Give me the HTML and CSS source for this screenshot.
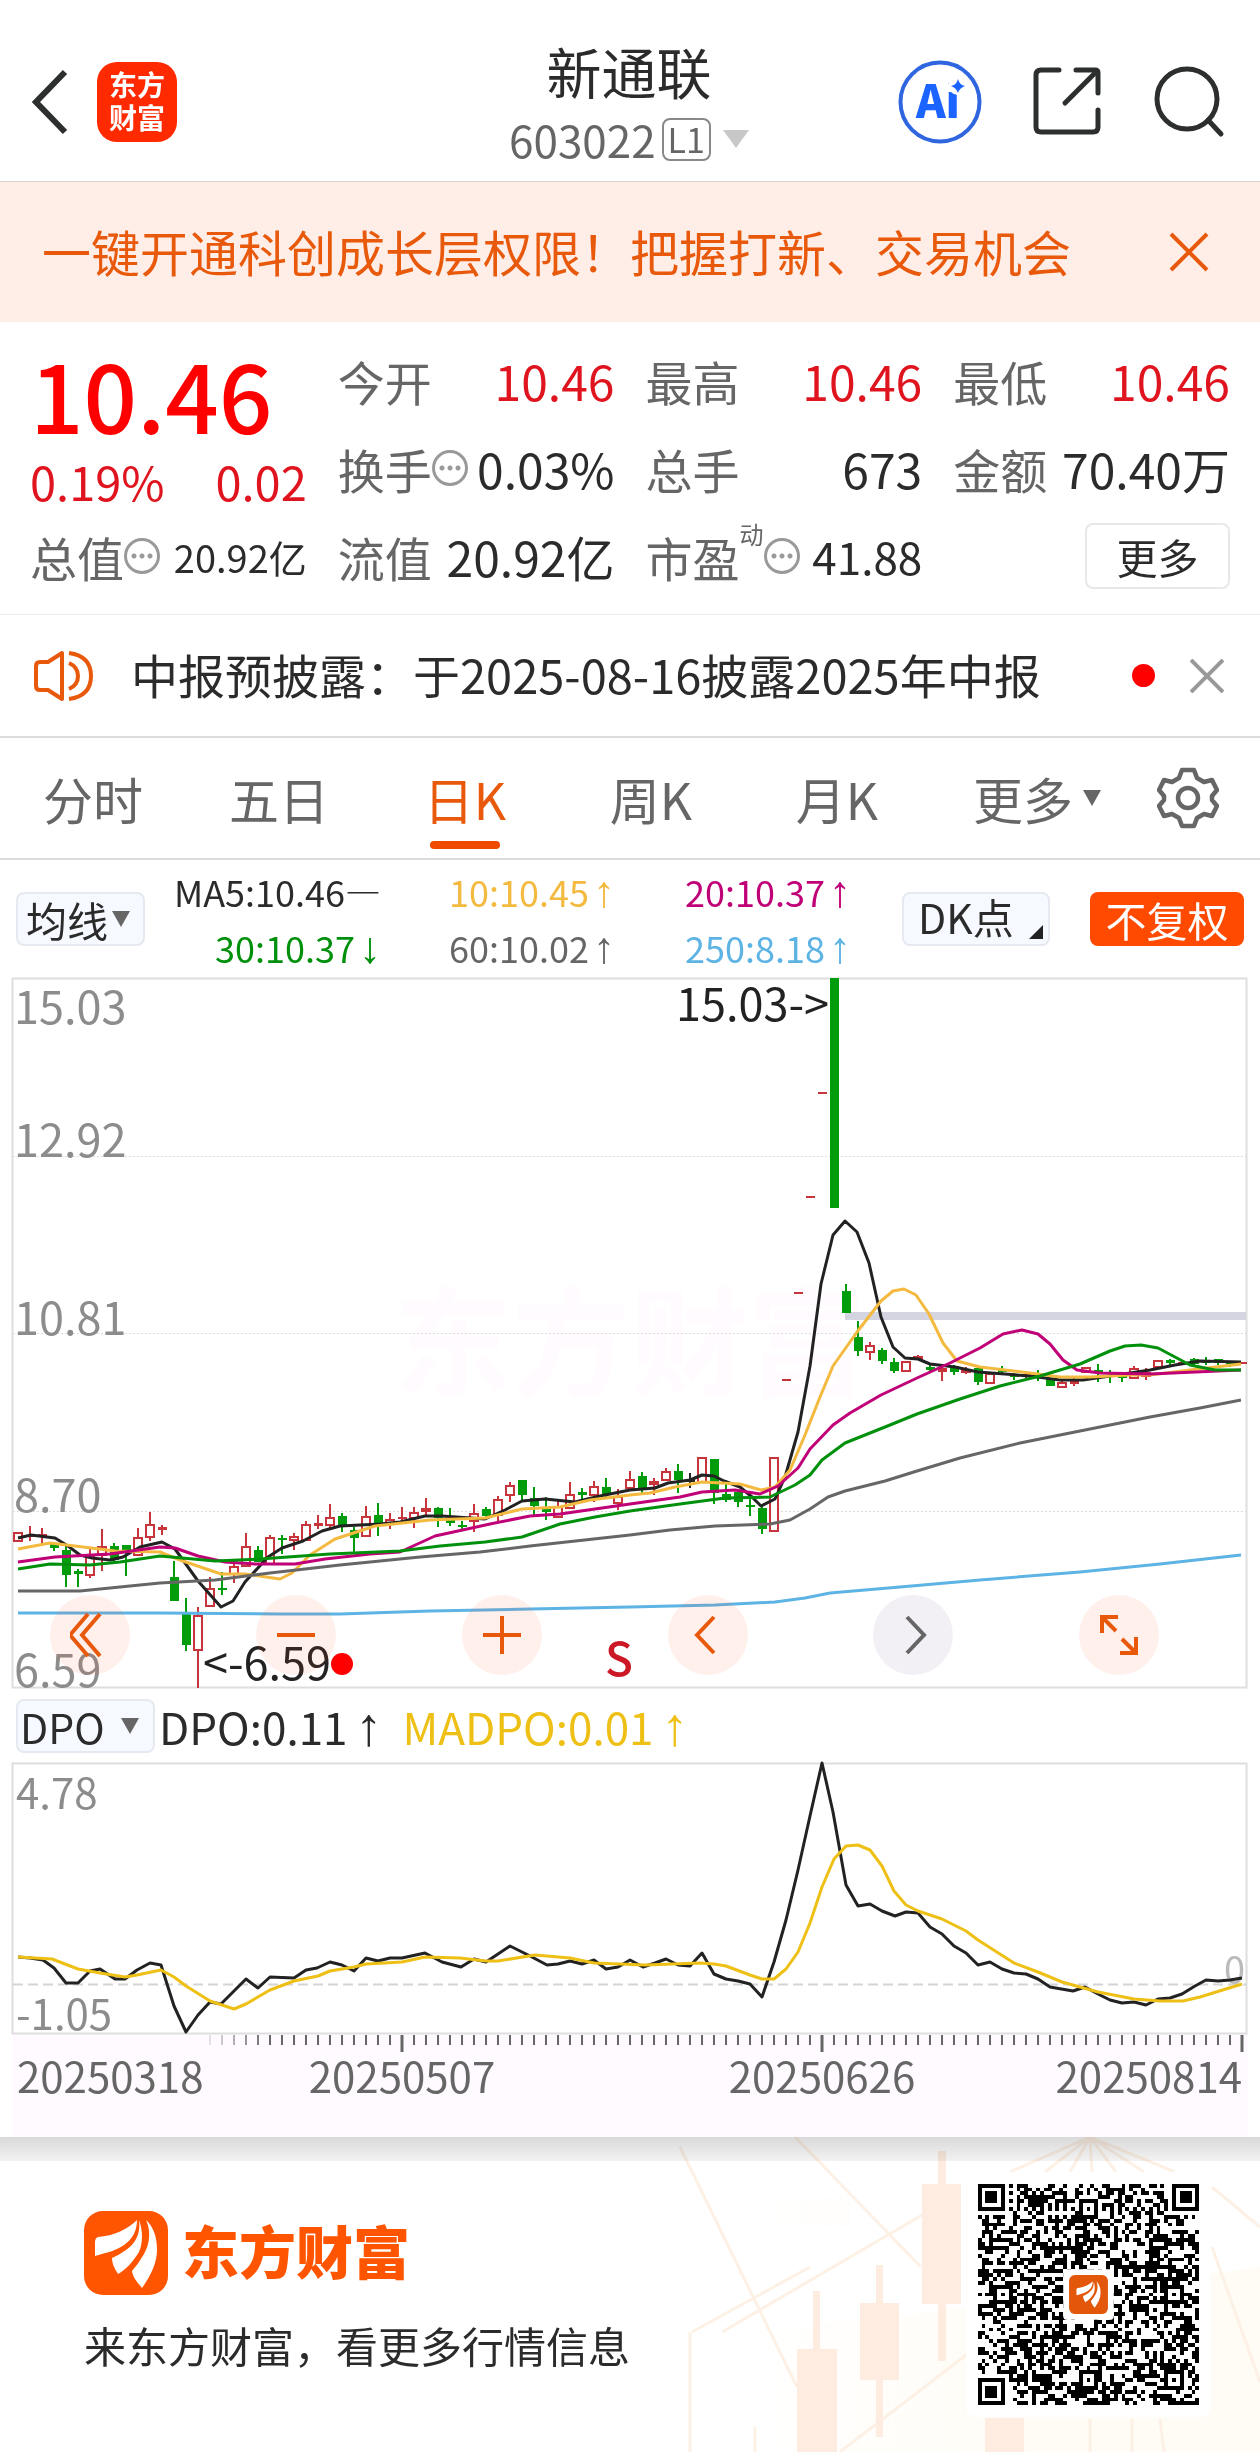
FILE: index.html
```html
<!DOCTYPE html>
<html lang="zh-CN">
<head>
<meta charset="utf-8">
<meta name="viewport" content="width=device-width, initial-scale=1">
<title>新通联 603022</title>
<link rel="stylesheet" href="styles.css">
</head>
<body>
<header class="top">
  <div class="top-side">
    <button class="icon-btn" type="button" aria-label="返回">
      <svg width="36" height="66" viewBox="0 0 36 66"><path d="M33 3 L4 33 L33 63" fill="none" stroke="#2d2f2f" stroke-width="6"/></svg>
    </button>
    <a class="brand" href="#home"><span>东方</span><span>财富</span></a>
  </div>
  <div class="top-title">
    <h1>新通联</h1>
    <div class="code">603022<span class="level">L1</span><svg width="26" height="18" viewBox="0 0 26 18"><path d="M0 0H26L13 18Z" fill="#c8c8c8"/></svg></div>
  </div>
  <div class="top-side top-actions">
    <button class="icon-btn" type="button" aria-label="Ai">
      <svg width="84" height="84" viewBox="0 0 84 84"><circle cx="42" cy="42" r="39.500" fill="#fff" stroke="#2f66e0" stroke-width="4"/><text x="40" y="58" text-anchor="middle" class="ai-text">Ai</text><circle cx="60" cy="25" r="10" fill="#fff"/><path d="M60 19Q61.500 25 67 26Q61.500 28 60 33Q58.500 28 53 26Q58.500 25 60 19Z" fill="#1b64ff"/></svg>
    </button>
    <button class="icon-btn" type="button" aria-label="分享">
      <svg width="70" height="70" viewBox="0 0 70 70"><g fill="none" stroke="#2d2f2f" stroke-width="5" stroke-linecap="round"><path d="M26 3H8Q3 3 3 8V60Q3 65 8 65H60Q65 65 65 60V43"/><path d="M43 3H62Q65 3 65 6V26"/><path d="M64 4L32 36"/></g></svg>
    </button>
    <button class="icon-btn" type="button" aria-label="搜索">
      <svg width="72" height="72" viewBox="0 0 72 72"><circle cx="33" cy="33" r="30" fill="none" stroke="#2d2f2f" stroke-width="5"/><path d="M54 54L67 68" stroke="#2d2f2f" stroke-width="5" stroke-linecap="round"/></svg>
    </button>
  </div>
</header>

<section class="promo">
  <a href="#open">一键开通科创成长层权限！把握打新、交易机会</a>
  <button class="icon-btn" type="button" aria-label="关闭">
    <svg width="40" height="40" viewBox="0 0 40 40"><path d="M2 2L38 38M38 2L2 38" stroke="#e8590c" stroke-width="4"/></svg>
  </button>
</section>

<section class="quote">
  <div class="last">
    <div class="price">10.46</div>
    <div class="change"><span>0.19%</span><span>0.02</span></div>
  </div>
  <div class="cell"><span class="label">今开</span><b class="up">10.46</b></div>
  <div class="cell"><span class="label">最高</span><b class="up">10.46</b></div>
  <div class="cell"><span class="label">最低</span><b class="up">10.46</b></div>
  <div class="cell"><span class="label">换手<i class="dots"></i></span><b>0.03%</b></div>
  <div class="cell"><span class="label">总手</span><b>673</b></div>
  <div class="cell"><span class="label">金额</span><b>70.40万</b></div>
  <div class="cell"><span class="label">总值<i class="dots"></i></span><b class="small">20.92亿</b></div>
  <div class="cell"><span class="label">流值</span><b>20.92亿</b></div>
  <div class="cell"><span class="label">市盈<sup>动</sup><i class="dots"></i></span><b class="mid">41.88</b></div>
  <div class="cell cell-end"><button class="more" type="button">更多</button></div>
</section>

<section class="notice">
  <svg width="62" height="54" viewBox="0 0 62 54"><g fill="none" stroke="#e8590c" stroke-width="4"><path d="M29 4V50L15 41H7Q3 41 3 37V17Q3 13 7 13H15Z" stroke-linejoin="round"/><path d="M36 14Q45 18 45 27Q45 36 36 40"/><path d="M36 4Q58 7 58 27Q58 47 36 50"/></g></svg>
  <a href="#report">中报预披露：于2025-08-16披露2025年中报</a>
  <i class="unread"></i>
  <button class="icon-btn" type="button" aria-label="关闭">
    <svg width="34" height="34" viewBox="0 0 34 34"><path d="M1 1L33 33M33 1L1 33" stroke="#999" stroke-width="4"/></svg>
  </button>
</section>

<nav class="tabs">
  <button type="button">分时</button>
  <button type="button">五日</button>
  <button type="button" class="active">日K</button>
  <button type="button">周K</button>
  <button type="button">月K</button>
  <button type="button">更多<svg width="18" height="16" viewBox="0 0 18 16"><path d="M0 0H18L9 16Z" fill="#666"/></svg></button>
  <button type="button" aria-label="设置">
    <svg width="62" height="62" viewBox="0 0 62 62"><g fill="none" stroke="#666" stroke-width="4.500" stroke-linejoin="round"><path d="M25 3H37L40 11L47 15L55 13L60 23L55 29V33L60 39L55 49L47 47L40 51L37 59H25L22 51L15 47L7 49L2 39L7 33V29L2 23L7 13L15 15L22 11Z"/><circle cx="31" cy="31" r="10"/></g></svg>
  </button>
</nav>

<section class="ma-bar">
  <label class="picker"><select aria-label="主图指标"><option>均线</option></select><svg width="18" height="16" viewBox="0 0 18 16"><path d="M0 0H18L9 16Z" fill="#666"/></svg></label>
  <div class="ma-list">
    <span class="c5">MA5:10.46—</span><span class="c10">10:10.45<i>↑</i></span><span class="c20">20:10.37<i>↑</i></span>
    <span class="c30">30:10.37<i>↓</i></span><span class="c60">60:10.02<i>↑</i></span><span class="c250">250:8.18<i>↑</i></span>
  </div>
  <button class="dk" type="button">DK点<svg width="14" height="14" viewBox="0 0 14 14"><path d="M14 0V14H0Z" fill="#222"/></svg></button>
  <button class="adjust" type="button">不复权</button>
</section>

<section class="chart">
  <svg class="plot" viewBox="0 0 1260 712" role="img" aria-label="日K线图">
    <text class="watermark" x="394" y="410">东方财富</text>
    <rect x="12.500" y="1.500" width="1234" height="709" fill="none" stroke="#dedede" stroke-width="2"/>
    <path d="M13 179.500H1246M13 356.500H1246M13 534.500H1246" stroke="#ddd" stroke-dasharray="2 2"/>
    <rect x="845" y="335" width="401" height="8" fill="#d4d5e0"/>
    <g id="candles"></g>
    <g id="averages" fill="none" stroke-width="3" stroke-linejoin="round"></g>
    <circle cx="342" cy="687" r="11" fill="#f00"/>
    <g class="axis-label"><text x="14" y="47">15.03</text><text x="14" y="180">12.92</text><text x="14" y="358">10.81</text><text x="14" y="535">8.70</text><text x="14" y="710">6.59</text></g>
    <g class="mark"><text x="829" y="44" text-anchor="end">15.03-&gt;</text><text x="203" y="703">&lt;-6.59</text></g>
    <text class="signal" x="619" y="699" text-anchor="middle">S</text>
  </svg>
  <div class="chart-tools">
    <button type="button" aria-label="最早"><svg width="40" height="46" viewBox="0 0 40 46"><path d="M18 2L0 23L18 44M30 2L12 23L30 44"/></svg></button>
    <button type="button" aria-label="缩小"><svg width="40" height="46" viewBox="0 0 40 46"><path d="M1 23H39"/></svg></button>
    <button type="button" aria-label="放大"><svg width="40" height="46" viewBox="0 0 40 46"><path d="M1 23H39M20 4V42"/></svg></button>
    <button type="button" aria-label="向左"><svg width="40" height="46" viewBox="0 0 40 46"><path d="M26 5L9 23L26 41"/></svg></button>
    <button type="button" aria-label="向右" class="off"><svg width="40" height="46" viewBox="0 0 40 46"><path d="M14 5L31 23L14 41"/></svg></button>
    <button type="button" aria-label="全屏"><svg width="40" height="46" viewBox="0 0 40 46"><path d="M3 21V5H19M3 5L17 19M37 25V41H21M37 41L23 27"/></svg></button>
  </div>
</section>

<section class="dpo-bar">
  <label class="picker"><select aria-label="副图指标"><option>DPO</option></select><svg width="18" height="16" viewBox="0 0 18 16"><path d="M0 0H18L9 16Z" fill="#666"/></svg></label>
  <span>DPO:0.11<i>↑</i></span>
  <span class="madpo">MADPO:0.01<i>↑</i></span>
</section>

<section class="chart">
  <svg class="plot" viewBox="0 0 1260 375" role="img" aria-label="DPO 指标图">
    <rect x="12" y="272" width="1236" height="103" fill="#fffaff"/>
    <rect x="12.500" y="1.500" width="1234" height="270" fill="none" stroke="#dedede" stroke-width="2"/>
    <path d="M13 222.500H1246" stroke="#d4d4d4" stroke-width="2" stroke-dasharray="10 5"/>
    <g class="axis-label sub"><text x="16" y="47">4.78</text><text x="16" y="268">-1.05</text><text class="zero" x="1245" y="222" text-anchor="end">0</text></g>
    <g id="dpo" fill="none" stroke-width="3" stroke-linejoin="round"></g>
    <g id="ticks" stroke="#666" stroke-width="2"></g>
    <g class="dates"><text x="17" y="331">20250318</text><text x="402" y="331" text-anchor="middle">20250507</text><text x="822" y="331" text-anchor="middle">20250626</text><text x="1242" y="331" text-anchor="end">20250814</text></g>
  </svg>
</section>

<footer class="share">
  <svg class="share-art" viewBox="0 0 600 315" preserveAspectRatio="xMaxYMin slice" aria-hidden="true">
    <defs><linearGradient id="warm"><stop offset=".1" stop-color="#fffcf5" stop-opacity="0"/><stop offset=".6" stop-color="#fffcf5"/></linearGradient></defs>
    <path d="M90 60H190V90H90ZM30 200L230 180L600 130V315H30Z" fill="url(#warm)"/>
    <g fill="none" stroke="#fdf1e6" stroke-width="3"><path d="M20 10L137 250M135 0L261 130M62 195L262 78M32 195L150 130M180 315L310 215M30 195V315M430 0L350 35M430 0L385 35M430 0L410 35M430 0L432 35M430 0L456 35M430 0L484 35M430 0L515 35M552 50L600 90M552 110L600 245M430 282V315M472 282V315M500 282L504 315M95 290V315"/></g>
    <g fill="#fdecdf"><path d="M278 14H286V47H301V167H286V224H278V167H262V47H278ZM216 128H223V166H239V243H223V300H216V243H200V166H216ZM153 154H160V212H177V315H137V212H153ZM325 281H364V315H325Z"/></g>
  </svg>
  <div class="share-text">
    <div class="share-brand">
      <svg width="84" height="84" viewBox="0 0 84 84"><rect width="84" height="84" rx="19" fill="#ff5500"/><g id="wings" fill="#fff"><path d="M53 9C44 18 30 25 14 26Q11 27 11 31V45C21 42 32 40 40 34C49 28 53 19 53 9Z"/><path d="M55 9C57 23 51 33 42 39Q35 44 28 47C28 53 31 58 34 63C43 58 50 49 55 41C59 32 59 19 55 9Z"/><path d="M62 9C67 19 66 33 60 43Q55 52 48 60C49 67 54 72 58 77C67 64 73 52 73 39C73 27 70 16 62 9Z"/></g></svg>
      <strong>东方财富</strong>
    </div>
    <p>来东方财富，看更多行情信息</p>
  </div>
  <svg class="qr" width="245" height="245" viewBox="-3 -3 63 63" role="img" aria-label="二维码">
    <rect x="-3" y="-3" width="63" height="63" rx="3" fill="#fff"/>
    <path id="qr-modules" fill="#000" shape-rendering="crispEdges"/>
    <rect x="22" y="22" width="13" height="13" rx="1" fill="#fff"/>
    <rect x="23.500" y="23.500" width="10" height="10" rx="1.500" fill="#e2570a"/>
    <use href="#wings" transform="translate(24.300 24.200) scale(.1)"/>
  </svg>
</footer>
<script src="app.js"></script>
</body>
</html>
```
FILE: styles.css
```css
* { box-sizing: border-box; }

body {
  margin: 0;
  background: #fff;
  color: #2b2b2b;
  font-family: "Noto Sans CJK SC", "Noto Sans", sans-serif;
  font-weight: 400;
}

button, select {
  font: inherit;
  color: inherit;
  border: 0;
  padding: 0;
  margin: 0;
  background: none;
  appearance: none;
}

a { color: inherit; text-decoration: none; }
svg { display: block; flex: none; }
i { font-style: normal; }
.icon-btn { display: block; }

/* header */
.top {
  display: grid;
  grid-template-columns: 1fr auto 1fr;
  padding: 40px 34px 16px 32px;
  border-bottom: 1px solid #d9d2d0;
}
.top-side { display: flex; align-items: center; gap: 29px; height: 124px; }
.top-actions { justify-content: flex-end; gap: 51px; }
.brand {
  display: flex;
  flex-direction: column;
  align-items: center;
  justify-content: center;
  width: 80px;
  height: 80px;
  border-radius: 20px;
  background: #ff2a00;
  color: #fff;
  font-size: 28px;
  line-height: 33px;
  font-weight: 700;
  padding-bottom: 2px;
}
.top-title { text-align: center; }
.top-title h1 { margin: 0; font-size: 55px; line-height: 60px; font-weight: 400; }
.code {
  display: flex;
  align-items: center;
  justify-content: center;
  gap: 6px;
  margin-top: 13px;
  font-size: 44px;
  line-height: 52px;
  color: #666;
}
.level {
  height: 43px;
  padding: 0 4px;
  border: 2px solid #888;
  border-radius: 8px;
  font-size: 34px;
  line-height: 37px;
}
.code svg { margin-left: 6px; }
.ai-text { font: oblique 6deg 900 45px "Noto Sans CJK SC", sans-serif; fill: #1b64ff; }

/* promo strip */
.promo {
  display: flex;
  align-items: center;
  justify-content: space-between;
  padding: 0 51px 0 42px;
  height: 140px;
  background: #ffeee8;
  color: #e8590c;
  font-size: 49px;
  line-height: 60px;
}
.promo a { padding-bottom: 2px; }

/* quote grid */
.quote {
  display: grid;
  grid-template-columns: repeat(4, 1fr);
  grid-auto-rows: 88px;
  column-gap: 31px;
  padding: 14px 30px;
  border-bottom: 1px solid #ebebeb;
}
.last { grid-row: span 2; padding-top: 3px; color: #f00; }
.price { font-size: 94px; line-height: 108px; font-weight: 500; }
.change {
  display: flex;
  justify-content: space-between;
  font-size: 47px;
  line-height: 68px;
  color: #e0141e;
}
.cell { display: flex; align-items: center; justify-content: space-between; white-space: nowrap; }
.cell b { font-size: 48px; font-weight: inherit; }
.cell .up { color: #e0141e; }
.cell .mid { font-size: 44px; }
.cell .small { font-size: 38px; }
.cell-end { justify-content: flex-end; }
.label { display: flex; align-items: center; font-size: 47px; color: #666; }
.label sup { align-self: flex-start; font-size: 24px; line-height: 24px; }
.dots {
  width: 36px;
  height: 36px;
  border: 3px solid #999;
  border-radius: 50%;
  background: radial-gradient(circle, #999 2px, transparent 3px) 50% 50% / 8px 8px content-box;
  background-repeat: repeat-x;
  padding: 0 3px;
}
.more {
  width: 145px;
  height: 66px;
  border: 2px solid #e8e8e8;
  border-radius: 8px;
  font-size: 41px;
  line-height: 56px;
}

/* notice */
.notice {
  display: flex;
  align-items: center;
  height: 123px;
  padding: 0 36px 0 33px;
  border-bottom: 2px solid #dcdcdc;
  font-size: 47px;
  line-height: 60px;
}
.notice a { flex: 1; margin-left: 36px; padding-bottom: 4px; white-space: nowrap; }
.unread { width: 23px; height: 23px; margin-right: 35px; border-radius: 50%; background: #f00; }

/* period tabs */
.tabs {
  display: grid;
  grid-template-columns: repeat(5, 186fr) 214fr 88fr;
  height: 122px;
  padding-right: 28px;
  border-bottom: 2px solid #dcdcdc;
  font-size: 50px;
  color: #666;
}
.tabs button {
  position: relative;
  display: flex;
  align-items: center;
  justify-content: center;
  gap: 10px;
}
.tabs .active { color: #e8590c; }
.tabs .active::after {
  content: "";
  position: absolute;
  bottom: 9px;
  width: 70px;
  height: 8px;
  border-radius: 4px;
  background: #f04a00;
}

/* indicator rows */
.picker {
  display: flex;
  align-items: center;
  height: 54px;
  border: 2px solid #e6e9f0;
  border-radius: 8px;
  background: #f6f9ff;
  font-size: 41px;
}
.picker select { height: 50px; line-height: 50px; padding-bottom: 2px; }
.ma-bar { display: flex; align-items: center; height: 117px; padding: 0 16px; }
.ma-bar .picker { width: 129px; padding-left: 8px; gap: 4px; }
.ma-list {
  display: grid;
  grid-template-columns: 212px 234px 236px;
  justify-items: end;
  flex: 1;
  margin-left: 24px;
  font-size: 36px;
  line-height: 56px;
}
.ma-list i, .dpo-bar i {
  margin-left: 4px;
  font-family: "Liberation Sans", sans-serif;
  font-size: 44px;
  line-height: 36px;
}
.dpo-bar i { margin-left: 8px; font-size: 54px; }
.c10 { color: #f4b93f; }
.c20 { color: #c00077; }
.c30 { color: #00900c; }
.c60 { color: #666; }
.c250 { color: #5db3e4; }
.dk {
  display: flex;
  align-items: flex-end;
  justify-content: space-between;
  width: 148px;
  height: 54px;
  padding: 0 5px 5px 14px;
  border: 2px solid #e6e9f0;
  border-radius: 8px;
  background: #f6f9ff;
  font-size: 41px;
  line-height: 46px;
}
.adjust {
  width: 154px;
  height: 54px;
  margin-left: 40px;
  border-radius: 8px;
  background: #ff4a00;
  color: #fff;
  font-size: 41px;
  line-height: 50px;
}
.dpo-bar {
  display: flex;
  align-items: center;
  height: 73px;
  padding-left: 16px;
  font-size: 44px;
  line-height: 60px;
}
.dpo-bar .picker { width: 139px; margin-right: 4px; padding-left: 2px; gap: 16px; }
.madpo { margin-left: 20px; color: #eec016; }

/* charts */
.chart { position: relative; }
.plot { width: 100%; height: auto; overflow: visible; }
.axis-label { font-size: 45px; fill: #8c8c8c; }
.sub { font-size: 42px; }
.zero { font-size: 38px; fill: #bbb; }
.mark { font-size: 45px; fill: #222; }
.signal { font-size: 46px; font-weight: 500; fill: #cc1826; }
.watermark { font-size: 118px; font-weight: 700; fill: #fffbff; }
.dates { font-size: 42px; fill: #666; }
.chart-tools {
  position: absolute;
  left: 4%;
  right: 8%;
  bottom: 14px;
  display: flex;
  justify-content: space-between;
}
.chart-tools button {
  display: grid;
  place-items: center;
  width: 80px;
  height: 80px;
  border-radius: 50%;
  background: rgba(255, 90, 40, .09);
}
.chart-tools path { fill: none; stroke: #e8590c; stroke-width: 4; }
.chart-tools .off { background: rgba(100, 60, 130, .08); }
.chart-tools .off path { stroke: #666; }

/* share footer */
.share {
  position: relative;
  display: flex;
  justify-content: space-between;
  align-items: flex-start;
  padding: 35px 49px 35px 84px;
  background: linear-gradient(#d9d9d9, #f2f2f2) 0 0 / 100% 24px no-repeat #fff;
}
.share-art { position: absolute; right: 0; top: 0; width: 600px; height: 100%; mix-blend-mode: multiply; }
.share-text { position: relative; padding-top: 39px; }
.share-brand { display: flex; align-items: center; gap: 14px; }
.share-brand strong { font-size: 57px; line-height: 76px; font-weight: 900; color: #ff5500; padding-bottom: 8px; }
.share-text p { margin: 20px 0 0; font-size: 42px; line-height: 60px; }
.qr { position: relative; }
```
FILE: app.js
```javascript
const NS = 'http://www.w3.org/2000/svg';
const FIRST_X = 18;
const STEP = 12;

function add(parent, name, attrs) {
  const node = document.createElementNS(NS, name);
  for (const key in attrs) node.setAttribute(key, attrs[key]);
  parent.appendChild(node);
}

// One session per row: direction, high, body top, body bottom, low.
const sessions = `r 555 555 565 565
r 549 559 560 564
r 551 558 560 566
g 565 567 571 574
g 567 574 598 610
g 592 595 597 610
r 572 578 599 601
r 552 569 579 594
g 566 570 583 585
g 568 569 574 599
r 551 560 579 579
r 535 547 561 564
r 548 551 553 558
g 584 601 624 624
g 621 636 668 674
r 630 638 674 711
r 600 611 630 630
g 595 612 613 618
r 587 589 598 606
r 556 569 590 590
g 569 574 585 585
r 558 560 588 588
g 558 562 563 577
r 556 559 564 573
r 544 547 564 564
r 538 547 549 552
r 527 540 549 551
g 536 540 549 555
g 550 554 561 575
r 529 539 560 560
g 526 539 549 559
r 536 542 547 552
r 530 541 542 545
r 530 535 542 551
r 521 531 535 538
g 530 532 541 550
g 531 542 546 549
g 544 549 550 554
r 527 536 545 555
g 530 533 539 542
r 519 522 539 544
r 505 508 519 525
g 504 504 518 524
g 510 522 529 539
g 520 532 535 543
r 524 529 541 541
r 505 517 532 532
g 511 516 518 523
r 504 509 519 525
g 501 511 518 522
r 512 519 527 533
r 494 502 512 512
g 495 500 511 516
r 501 504 508 518
r 491 494 504 504
g 487 495 503 516
k 496 503 505 511
r 480 480 506 506
g 483 483 516 527
g 503 518 523 525
g 515 516 525 530
g 522 529 530 539
g 529 532 552 557
r 480 480 555 555
r 403 403 403 403
r 316 316 316 316
r 220 220 220 220
r 116 116 116 116
g 2 2 231 231
g 307 315 336 336
g 344 361 374 379
r 365 368 376 383
g 371 374 384 387
g 381 386 394 396
r 384 384 395 395
r 378 379 383 383
g 386 391 393 396
r 390 392 395 404
g 388 390 395 398
r 390 392 396 397
g 388 392 405 408
r 396 396 407 407
g 389 393 395 398
g 396 398 400 403
r 395 398 400 401
g 393 398 399 404
g 401 402 409 409
r 404 405 411 411
r 401 405 407 409
r 390 390 396 396
g 387 394 396 405
g 393 396 397 406
g 398 400 401 405
r 389 391 402 402
r 391 395 400 403
r 383 383 391 391
g 382 384 386 389
r 385 386 387 388
g 381 383 387 388
g 380 384 386 388
g 382 383 386 388
g 385 386 387 390
r 386 386 386 386`.split('\n');

const tone = { r: '#c8343c', g: '#009c0c', k: '#222' };
const candles = document.getElementById('candles');
sessions.forEach((row, i) => {
  const [kind, ...values] = row.split(' ');
  const [high, top, bottom, low] = values.map(Number);
  const x = FIRST_X + STEP * i;
  const color = tone[kind];
  if (high < top) add(candles, 'path', { d: `M${x} ${high}V${top}`, stroke: color, 'stroke-width': 2 });
  if (low > bottom) add(candles, 'path', { d: `M${x} ${bottom}V${low}`, stroke: color, 'stroke-width': 2 });
  if (kind === 'r' && bottom - top > 3) {
    add(candles, 'rect', { x: x - 4, y: top + 1, width: 8, height: bottom - top - 2, fill: '#fff', stroke: color, 'stroke-width': 2 });
  } else {
    add(candles, 'rect', { x: x - 4, y: top - 1, width: 9, height: Math.max(2, bottom - top + 1), fill: color });
  }
});

const averages = {
  '#5db3e4': '18,636 160,636 280,637 340,637 430,634 530,632 630,630 715,628 775,625 805,621 830,616 900,610 980,603 1080,595 1160,587 1241,578',
  '#222': '18,561 31,558 55,561 68,569 80,578 92,581 110,583 123,580 140,570 162,565 175,572 198,604 221,630 233,624 245,605 268,580 282,571 303,564 322,554 340,549 380,547 400,545 425,539 442,539 485,542 505,533 522,524 545,522 575,525 600,519 630,513 655,511 668,506 690,503 702,498 714,499 724,504 740,510 752,520 761,529 775,522 785,500 798,455 810,389 821,307 833,258 845,244 857,255 869,286 881,340 893,370 905,381 918,382 930,387 955,390 978,395 1030,399 1060,403 1083,403 1110,399 1130,396 1150,393 1175,388 1200,384 1241,385',
  '#f4b93f': '18,572 50,566 75,569 115,574 160,575 180,583 221,597 245,597 280,602 292,596 310,578 335,562 375,549 430,543 485,541 522,532 560,530 590,523 630,518 650,516 675,510 702,505 740,507 761,513 775,510 790,493 805,458 820,420 833,389 857,355 881,324 893,314 904,312 916,318 929,337 943,366 957,384 980,390 1030,396 1060,400 1090,400 1130,398 1150,398 1190,393 1241,387',
  '#c00077': '18,585 55,580 110,577 160,570 175,571 198,579 225,585 255,587 295,587 325,582 370,577 400,575 435,559 490,547 530,539 560,537 595,532 630,527 680,520 702,515 735,513 760,517 778,509 798,491 810,472 833,448 850,436 881,418 917,401 950,386 980,371 1003,357 1022,353 1038,357 1050,367 1063,383 1077,393 1100,396 1150,397 1241,393',
  '#00900c': '18,592 50,587 90,588 120,585 160,579 215,584 260,582 330,577 400,574 440,569 485,565 522,560 560,547 595,540 630,534 680,527 725,521 770,520 795,508 810,498 822,483 845,466 890,448 917,437 960,422 1000,409 1040,399 1080,387 1110,374 1125,369 1141,368 1158,371 1175,380 1190,388 1215,393 1241,393',
  '#666': '18,614 80,614 160,606 215,603 270,596 340,588 420,580 480,575 530,569 630,558 670,553 715,549 770,547 790,543 810,532 828,520 845,514 885,504 917,494 960,481 1020,466 1100,450 1150,440 1200,431 1241,423'
};
const dpo = {
  '#222': '18,195 30,196 43,198 54,206 66,221 78,221 90,209 100,207 115,217 125,217 137,208 150,201 161,203 174,244 186,270 198,253 210,240 221,242 233,230 246,217 258,226 270,215 294,216 306,208 317,206 330,200 342,203 354,209 366,196 378,199 390,196 402,196 425,191 442,200 461,205 474,197 486,200 510,184 530,194 547,203 558,202 570,199 582,202 594,198 606,207 618,205 630,198 643,205 655,201 666,197 678,203 690,204 702,191 714,212 726,217 738,219 750,222 762,235 774,200 786,158 798,108 810,54 822,1 833,50 846,123 858,144 870,142 882,149 895,154 906,150 918,151 930,165 942,172 954,184 966,191 978,203 990,200 1002,207 1014,211 1026,212 1038,217 1050,225 1073,229 1085,225 1098,232 1110,238 1122,241 1134,240 1146,243 1158,237 1170,236 1182,232 1195,224 1206,218 1218,219 1230,218 1242,216',
  '#eec016': '18,195 52,197 78,207 100,211 125,215 137,213 161,208 174,215 186,224 210,239 234,247 246,242 270,228 294,219 318,214 330,209 354,205 366,202 402,200 425,195 460,196 486,199 498,199 535,193 570,196 594,201 645,203 700,201 714,202 726,204 750,213 762,217 774,217 786,207 798,190 810,161 822,125 834,97 846,84 858,83 870,88 882,104 894,129 906,143 918,149 942,157 966,169 978,178 1014,201 1038,210 1062,220 1098,230 1134,237 1160,239 1183,239 1200,235 1242,222'
};
function drawLines(id, lines) {
  const group = document.getElementById(id);
  for (const color in lines) add(group, 'polyline', { points: lines[color], stroke: color });
}
drawLines('averages', averages);
drawLines('dpo', dpo);

// Session ticks, fading in from the left; long ones sit on the dated sessions.
const ticks = document.getElementById('ticks');
for (let i = 16; i <= 102; i++) {
  const major = i === 32 || i === 67 || i === 102;
  const x = FIRST_X + STEP * i;
  add(ticks, 'path', { d: `M${x} 273V${major ? 290 : 283}`, 'stroke-width': major ? 3 : 2, opacity: Math.min(1, (i - 15) / 6) });
}

// QR code: 57 modules a side, finder and alignment marks over the data area.
const SIZE = 57;
let seed = 603022;
const random = () => (seed = (seed * 1103515245 + 12345) % 2147483648) / 2147483648;
const grid = Array.from({ length: SIZE }, () => Array.from({ length: SIZE }, () => random() < 0.5));
for (let i = 8; i < SIZE - 8; i++) grid[6][i] = grid[i][6] = i % 2 === 0;
function mark(cx, cy, radius) {
  for (let y = cy - radius; y <= cy + radius; y++) {
    for (let x = cx - radius; x <= cx + radius; x++) {
      if (!grid[y] || x < 0 || x >= SIZE) continue;
      const ring = Math.max(Math.abs(x - cx), Math.abs(y - cy));
      grid[y][x] = radius === 4 ? ring === 3 || ring < 2 : ring !== 1;
    }
  }
}
[[3, 3], [53, 3], [3, 53]].forEach(([x, y]) => mark(x, y, 4));
[[28, 6], [6, 28], [50, 28], [28, 50], [50, 50]].forEach(([x, y]) => mark(x, y, 2));
let path = '';
grid.forEach((row, y) => row.forEach((on, x) => { if (on) path += `M${x} ${y}h1v1h-1z`; }));
document.getElementById('qr-modules').setAttribute('d', path);
```
